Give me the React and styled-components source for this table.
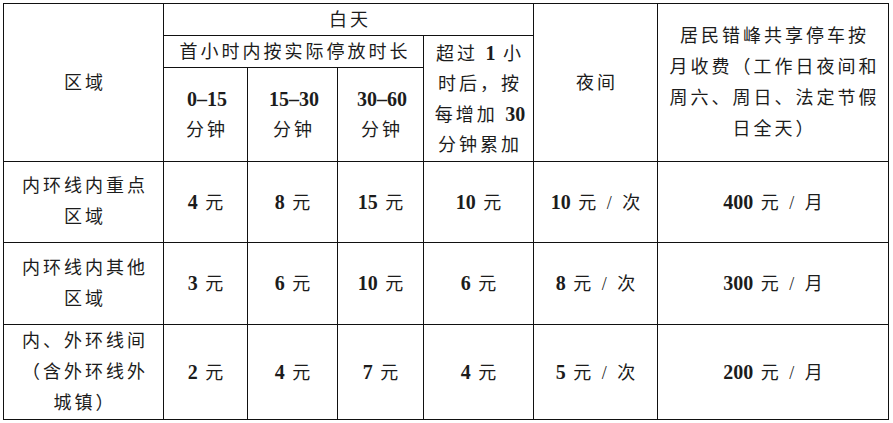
import React from "react";
import styled, { createGlobalStyle } from "styled-components";

const GlobalStyle = createGlobalStyle`
body{
  margin: 0;
  background: #fff;
  color: #1c1c1c;
  font-family: "Liberation Serif", "Noto Sans CJK SC", serif;
}
`;

const Page = styled.div`
  padding: 3px 0 0 3px;
`;

const Table = styled.table`
  border-collapse: collapse;
  table-layout: fixed;
  width: 885px;
  font-size: 18px;
  letter-spacing: 3px;
`;

const Col = styled.col`
  width: ${(p) => p.$w}px;
`;

const Row = styled.tr`
  height: ${(p) => p.$h}px;
`;

const Cell = styled.td`
  border: 1px solid #111;
  text-align: center;
  vertical-align: middle;
  padding: 0 0 0 3px;
  line-height: ${(p) => p.$lh || 30}px;
  white-space: nowrap;
`;

const Num = styled.span`
  font-size: 20px;
  font-weight: 700;
  letter-spacing: 0;
`;

const cols = [160, 84, 90, 86, 110, 124, 231];

const rows = [
  {
    area: ["内环线内重点", "区域"],
    vals: ["4", "8", "15", "10"],
    night: "10",
    month: "400",
  },
  {
    area: ["内环线内其他", "区域"],
    vals: ["3", "6", "10", "6"],
    night: "8",
    month: "300",
  },
  {
    area: ["内、外环线间", "（含外环线外", "城镇）"],
    vals: ["2", "4", "7", "4"],
    night: "5",
    month: "200",
  },
];

const heights = [81, 82, 95];

function Lines({ items }) {
  return items.map((t, i) => (
    <React.Fragment key={i}>
      {i > 0 && <br />}
      {t}
    </React.Fragment>
  ));
}

export default function App() {
  return (
    <>
      <GlobalStyle />
      <Page>
        <Table>
          <colgroup>
            {cols.map((w, i) => (
              <Col key={i} $w={w} />
            ))}
          </colgroup>
          <tbody>
            <Row $h={32}>
              <Cell rowSpan={3}>区域</Cell>
              <Cell colSpan={4}>白天</Cell>
              <Cell rowSpan={3}>夜间</Cell>
              <Cell rowSpan={3} $lh={31}>
                <Lines
                  items={[
                    "居民错峰共享停车按",
                    "月收费（工作日夜间和",
                    "周六、周日、法定节假",
                    "日全天）",
                  ]}
                />
              </Cell>
            </Row>
            <Row $h={32}>
              <Cell colSpan={3}>首小时内按实际停放时长</Cell>
              <Cell rowSpan={2}>
                超过 <Num>1</Num> 小<br />
                时后，按<br />
                每增加 <Num>30</Num>
                <br />
                分钟累加
              </Cell>
            </Row>
            <Row $h={94}>
              <Cell>
                <Num>0–15</Num>
                <br />
                分钟
              </Cell>
              <Cell>
                <Num>15–30</Num>
                <br />
                分钟
              </Cell>
              <Cell>
                <Num>30–60</Num>
                <br />
                分钟
              </Cell>
            </Row>
            {rows.map((r, i) => (
              <Row key={i} $h={heights[i]}>
                <Cell $lh={31}>
                  <Lines items={r.area} />
                </Cell>
                {r.vals.map((v, j) => (
                  <Cell key={j}>
                    <Num>{v}</Num> 元
                  </Cell>
                ))}
                <Cell>
                  <Num>{r.night}</Num> 元 / 次
                </Cell>
                <Cell>
                  <Num>{r.month}</Num> 元 / 月
                </Cell>
              </Row>
            ))}
          </tbody>
        </Table>
      </Page>
    </>
  );
}
